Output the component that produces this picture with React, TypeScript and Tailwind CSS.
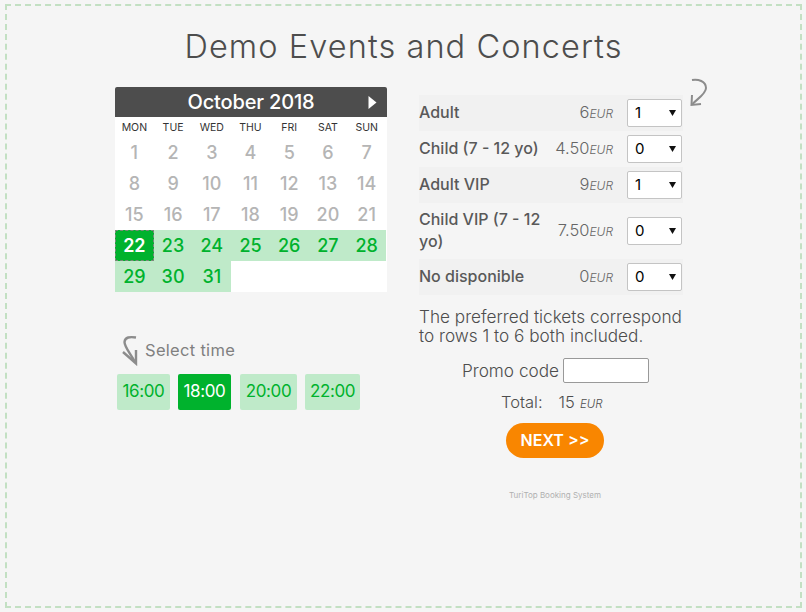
import React from "react";

const F = "font-['Inter','Open_Sans',sans-serif]";

const cellBase = "flex h-[31px] items-center justify-center text-[18px] font-medium";

function Arrow1() {
  return (
    <svg width="18" height="30" viewBox="0 0 18 30" fill="none" stroke="#8c8c8c" strokeWidth="2">
      <path d="M2 2 C8 1 16 3 16 10 C16 16 7 21 2.5 26" />
      <path d="M2 17 L1.5 27 L11 26" />
    </svg>
  );
}

function Arrow2() {
  return (
    <svg width="17" height="31" viewBox="0 0 17 31" fill="none" stroke="#8c8c8c" strokeWidth="2.4">
      <path d="M14 2.5 C8 1.5 3 2 2.5 7 C2.5 12 8 18 13 27" />
      <path d="M1 17 L14 28.5 L14 15" />
    </svg>
  );
}

function Qty({ qty }: { qty: string }) {
  return (
    <div className="relative ml-[14px] h-[28px] w-[55px]">
      <select
        defaultValue={qty}
        className="h-[28px] w-[55px] appearance-none rounded-[2px] border border-[#c4c4c4] bg-white pl-[7px] text-[15px] text-black"
      >
        <option>{qty}</option>
      </select>
      <svg width="7" height="6" viewBox="0 0 7 6" className="pointer-events-none absolute left-[42px] top-[11px]">
        <path d="M0 0 H7 L3.5 6 Z" fill="#111" />
      </svg>
    </div>
  );
}

function Row({ name, price, qty, alt, tall }: { name: string; price: string; qty: string; alt?: boolean; tall?: boolean }) {
  return (
    <div className={`flex w-[264px] items-center ${tall ? "h-[56px]" : "h-[36px]"} ${alt ? "bg-[#f1f1f1]" : ""}`}>
      <div className="w-[129px] pb-[2px] text-[16px] font-medium leading-[22px] text-[#595959]">{name}</div>
      <div className="flex w-[65px] items-baseline justify-end pb-[2px] text-[#666]">
        <span className="text-[16.5px] font-light">{price}</span>
        <span className="text-[12px] font-light italic">EUR</span>
      </div>
      <Qty qty={qty} />
    </div>
  );
}

export default function App() {
  const days = Array.from({ length: 31 }, (_, i) => i + 1);
  const heads = ["MON", "TUE", "WED", "THU", "FRI", "SAT", "SUN"];
  const times = [
    { t: "16:00", w: "w-[53px]" },
    { t: "18:00", w: "w-[53px]", on: true },
    { t: "20:00", w: "ml-[1px] w-[57px]" },
    { t: "22:00", w: "w-[55px]" },
  ];
  return (
    <div className={`${F} h-[612px] w-[806px] bg-[#f5f5f5] pb-[4px] pl-[5px] pr-[5px] pt-[4px]`}>
      <div className="h-[604px] w-[797px] border-2 border-dashed border-[#c3e0c3]">
        <h1 className="mt-[22px] h-[40px] text-center text-[32.5px] font-light leading-[38px] tracking-[1.08px] text-[#4d4d4d]">
          Demo Events and Concerts
        </h1>
        <div className="mt-[19px] flex pl-[108px]">
          <div className="w-[272px]">
            <div className="flex h-[205px] flex-col bg-white">
              <div className="flex h-[30px] items-center rounded-t-[2px] bg-[#4d4d4d] text-white">
                <div className="flex-1 pl-[19px] text-center text-[20px] font-medium tracking-[-0.15px]">October 2018</div>
                <svg width="9" height="13" viewBox="0 0 9 13" className="mr-[10px]"><path d="M0.5 0 L8.5 6.5 L0.5 13 Z" fill="#fff" /></svg>
              </div>
              <div className="grid h-[20px] w-[271px] grid-cols-7 items-center pt-[1px]">
                {heads.map((h) => (
                  <div key={h} className="text-center text-[10.5px] font-normal text-[#333]">{h}</div>
                ))}
              </div>
              <div className="grid w-[271px] grid-cols-7">
                {days.map((d) => (
                  <div
                    key={d}
                    className={`${cellBase} ${
                      d < 22
                        ? "text-[#b5b5b5]"
                        : d === 22
                          ? "border border-dashed border-[#7a8a7a] bg-[#00b22d] font-semibold text-white"
                          : "bg-[#bfeac9] text-[#00b22d]"
                    }`}
                  >
                    {d}
                  </div>
                ))}
              </div>
            </div>
            <div className="mt-[43px] flex h-[31px] items-center pl-[7px]">
              <Arrow2 />
              <span className="ml-[6px] mt-[-1px] text-[16.5px] font-normal tracking-[0.3px] text-[#808080]">Select time</span>
            </div>
            <div className="ml-[2px] mt-[8px] flex gap-[8px]">
              {times.map((x) => (
                <div
                  key={x.t}
                  className={`flex h-[36px] ${x.w} items-center justify-center rounded-[2px] text-[17px] font-normal tracking-[-0.4px] ${
                    x.on ? "bg-[#00b22d] font-medium text-white" : "bg-[#bfeac9] text-[#00b22d]"
                  }`}
                >
                  {x.t}
                </div>
              ))}
            </div>
          </div>
          <div className="relative ml-[32px] w-[264px] pt-[8px]">
            <div className="absolute left-[271px] top-[-9px]"><Arrow1 /></div>
            <Row name="Adult" price="6" qty="1" alt />
            <Row name="Child (7 - 12 yo)" price="4.50" qty="0" />
            <Row name="Adult VIP" price="9" qty="1" alt />
            <Row name="Child VIP (7 - 12 yo)" price="7.50" qty="0" tall />
            <Row name="No disponible" price="0" qty="0" alt />
            <p className="mt-[12px] w-[270px] text-[17.2px] font-light leading-[19px] text-[#4d4d4d]">
              The preferred tickets correspond to rows 1 to 6 both included.
            </p>
            <div className="mt-[13px] flex items-center pl-[43px] text-[17.2px] font-light text-[#4d4d4d]">
              <span>Promo code</span>
              <input className="ml-[4px] h-[25px] w-[86px] rounded-[2px] border border-[#999] bg-white" />
            </div>
            <div className="mt-[6px] flex items-baseline pl-[82px] text-[16.5px] font-light text-[#4d4d4d]">
              <span>Total:</span>
              <span className="ml-[16px]">15</span>
              <span className="ml-[5px] text-[11.5px] italic">EUR</span>
            </div>
            <div className="mt-[8px] flex justify-center">
              <button className="ml-[8px] h-[35px] w-[98px] rounded-full bg-[#f98600] text-[16px] font-semibold text-white">NEXT &gt;&gt;</button>
            </div>
            <div className="mt-[31px] pl-[8px] text-center text-[8px] text-[#b0b0b0]">TuriTop Booking System</div>
          </div>
        </div>
      </div>
    </div>
  );
}
